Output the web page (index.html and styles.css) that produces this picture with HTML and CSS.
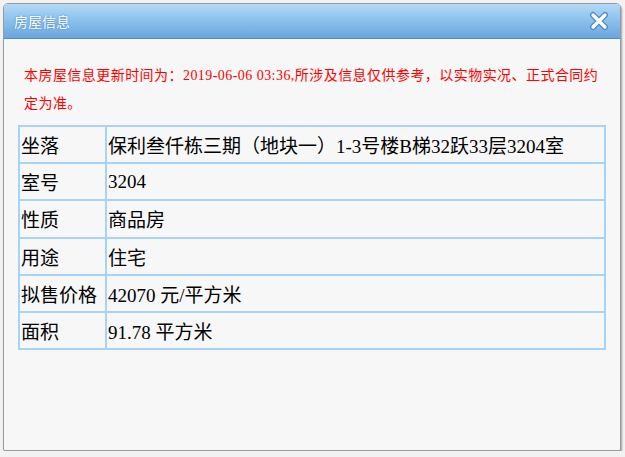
FILE: index.html
```html
<!DOCTYPE html>
<html lang="zh-CN">
<head>
    <meta charset="UTF-8">
    <meta name="viewport" content="width=device-width, initial-scale=1.0">
    <title>房屋信息</title>
    <link rel="stylesheet" href="styles.css">
</head>
<body>

    <div class="dialog">
        <div class="dialog-header">
            <span class="dialog-title">房屋信息</span>
            <span class="close-btn" title="关闭">
                <svg width="20" height="20" viewBox="0 0 20 20">
                    <path d="M4 4 L16 16 M16 4 L4 16" stroke="#4a86c6" stroke-width="6" stroke-linecap="round"/>
                    <path d="M4 4 L16 16 M16 4 L4 16" stroke="#ffffff" stroke-width="3.4" stroke-linecap="round"/>
                </svg>
            </span>
        </div>

        <div class="dialog-body">
            <p class="notice">本房屋信息更新时间为：2019-06-06 03:36,所涉及信息仅供参考，以实物实况、正式合同约定为准。</p>

            <table class="info-table">
                <tr>
                    <td class="label">坐落</td>
                    <td>保利叁仟栋三期（地块一）1-3号楼B梯32跃33层3204室</td>
                </tr>
                <tr>
                    <td class="label">室号</td>
                    <td>3204</td>
                </tr>
                <tr>
                    <td class="label">性质</td>
                    <td>商品房</td>
                </tr>
                <tr>
                    <td class="label">用途</td>
                    <td>住宅</td>
                </tr>
                <tr>
                    <td class="label">拟售价格</td>
                    <td>42070 元/平方米</td>
                </tr>
                <tr>
                    <td class="label">面积</td>
                    <td>91.78 平方米</td>
                </tr>
            </table>
        </div>
    </div>

</body>
</html>
```

FILE: styles.css
```css
body {
    margin: 0;
    padding: 3px 0 0 3px;
    background-color: #f2f2f2;
    font-family: "Liberation Serif", "Noto Sans CJK SC", serif;
}

/* 弹窗外框 */
.dialog {
    width: 616px;
    height: 446px;
    background-color: #f7f7f7;
    border: 1px solid #9a9a9a;
    border-radius: 5px 5px 2px 2px;
    box-shadow: 1px 2px 2px rgba(0, 0, 0, 0.35);
    display: flex;
    flex-direction: column;
    overflow: hidden;
}

.dialog-header {
    height: 34px;
    background: linear-gradient(to bottom, #b3daf7 0%, #8ec2ee 45%, #6aa6dd 100%);
    border-bottom: 1px solid #4f8fcf;
    display: flex;
    align-items: center;
    justify-content: space-between;
    padding: 0 11px 0 10px;
}

.dialog-title {
    font-family: "Noto Sans CJK SC", sans-serif;
    font-size: 14px;
    color: #ffffff;
    text-shadow: 0 0 2px #3d7cbf;
}

.close-btn {
    display: flex;
    cursor: pointer;
}

.dialog-body {
    padding: 23px 14px 0 14px;
}

.notice {
    margin: 0 0 7px 6px;
    font-size: 14px;
    line-height: 28px;
    color: #ff0000;
    letter-spacing: 0.45px;
}

.info-table {
    width: 588px;
    border-collapse: collapse;
    font-size: 19px;
    color: #000;
}

.info-table td {
    border: 2px solid #a6d3f8;
    height: 35.2px;
    padding: 0 1px;
    white-space: nowrap;
}

.info-table td.label {
    width: 83px;
}
```
